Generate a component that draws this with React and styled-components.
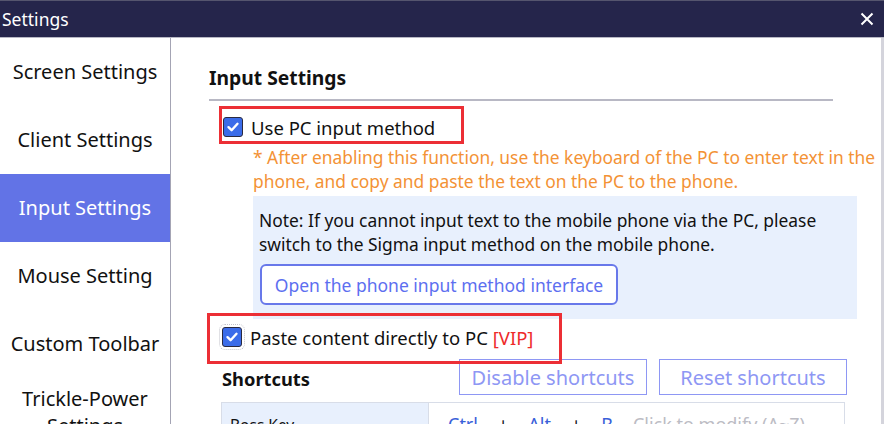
import styled, { createGlobalStyle } from "styled-components";

const GlobalStyle = createGlobalStyle`
  html, body {
    margin: 0;
    padding: 0;
    overflow: hidden;
    background: #ffffff;
  }
  body {
    font-family: "Noto Sans", "Liberation Sans", sans-serif;
    color: #111;
  }
`;

const menu = [
  "Screen Settings",
  "Client Settings",
  "Input Settings",
  "Mouse Setting",
  "Custom Toolbar",
  "Trickle-Power Settings",
];

const CheckIcon = () => (
  <svg width="14" height="14" viewBox="0 0 14 14">
    <path d="M2.5 7.2 L5.6 10.2 L11.5 3.8" fill="none" stroke="#fff" strokeWidth="2.4" strokeLinecap="round" strokeLinejoin="round" />
  </svg>
);

const CloseIcon = () => (
  <svg width="14" height="14" viewBox="0 0 14 14">
    <path d="M1.5 1.5 L12.5 12.5 M12.5 1.5 L1.5 12.5" stroke="#fff" strokeWidth="2" />
  </svg>
);

const App = () => {
  return (
    <Window>
      <GlobalStyle />
      <TitleBar>
        <span>Settings</span>
        <CloseButton>
          <CloseIcon />
        </CloseButton>
      </TitleBar>
      <BodyWrapper>
        <Sidebar>
          {menu.map((m) => (
            <MenuItem key={m} $active={m === "Input Settings"}>
              {m}
            </MenuItem>
          ))}
        </Sidebar>
        <Content>
          <Heading>Input Settings</Heading>
          <Divider />
          <CheckRow>
            <Highlight $left={-4} $top={-8} $w={245} $h={38} />
            <Checkbox>
              <CheckIcon />
            </Checkbox>
            <span>Use PC input method</span>
          </CheckRow>
          <Hint>
            * After enabling this function, use the keyboard of the PC to enter text in the
            phone, and copy and paste the text on the PC to the phone.
          </Hint>
          <NoteBox>
            <NoteText>
              Note: If you cannot input text to the mobile phone via the PC, please switch to the
              Sigma input method on the mobile phone.
            </NoteText>
            <OpenButton>Open the phone input method interface</OpenButton>
          </NoteBox>
          <CheckRow $second>
            <Highlight $left={-15} $top={-11} $w={355} $h={51} />
            <Checkbox $focus>
              <CheckIcon />
            </Checkbox>
            <span>
              Paste content directly to PC <Vip>[VIP]</Vip>
            </span>
          </CheckRow>
          <ShortcutHeader>
            <SubHeading>Shortcuts</SubHeading>
            <ButtonGroup>
              <OutlineButton>Disable shortcuts</OutlineButton>
              <OutlineButton>Reset shortcuts</OutlineButton>
            </ButtonGroup>
          </ShortcutHeader>
          <ShortcutTable>
            <KeyName>Boss Key</KeyName>
            <KeyCombo>
              <KeyPart>Ctrl</KeyPart>
              <Plus>+</Plus>
              <KeyPart>Alt</KeyPart>
              <Plus>+</Plus>
              <KeyPart>B</KeyPart>
              <Placeholder>Click to modify (A~Z)</Placeholder>
            </KeyCombo>
          </ShortcutTable>
        </Content>
      </BodyWrapper>
    </Window>
  );
};

export default App;

const Window = styled.div`
  width: 884px;
  height: 424px;
  display: flex;
  flex-direction: column;
  overflow: hidden;
`;

const TitleBar = styled.header`
  height: 36px;
  flex-shrink: 0;
  display: flex;
  align-items: center;
  justify-content: space-between;
  padding: 0 10px 0 2px;
  background-color: #25254b;
  border-top: 1px solid #55556e;
  border-bottom: 1px solid #b8b8c4;
  color: #fff;
  font-size: 17.5px;
`;

const CloseButton = styled.div`
  width: 14px;
  height: 14px;
  display: flex;
`;

const BodyWrapper = styled.div`
  flex: 1;
  display: flex;
  min-height: 0;
  border-right: 3px solid #d4d4dc;
`;

const Sidebar = styled.nav`
  width: 170px;
  flex-shrink: 0;
  border-right: 1px solid #a4a4b4;
  display: flex;
  flex-direction: column;
`;

const MenuItem = styled.div`
  height: 68px;
  flex-shrink: 0;
  display: flex;
  align-items: center;
  justify-content: center;
  text-align: center;
  font-size: 20px;
  line-height: 27px;
  padding: 0 0 1px 0;
  box-sizing: border-box;
  color: ${(p) => (p.$active ? "#fff" : "#111")};
  background-color: ${(p) => (p.$active ? "#6273e6" : "transparent")};
`;

const Content = styled.main`
  flex: 1;
  padding: 27px 0 0 38px;
  min-width: 0;
`;

const Heading = styled.h2`
  margin: 0;
  font-size: 19.3px;
  font-weight: 700;
  line-height: 25px;
`;

const Divider = styled.div`
  width: 624px;
  height: 2px;
  margin-top: 9px;
  background-color: #b8b8c4;
`;

const CheckRow = styled.div`
  position: relative;
  display: flex;
  align-items: center;
  gap: 8px;
  height: 26px;
  margin: ${(p) => (p.$second ? "5px 0 0 13px" : "13px 0 0 14px")};
  font-size: 18.5px;
`;

const Highlight = styled.span`
  position: absolute;
  left: ${(p) => p.$left}px;
  top: ${(p) => p.$top}px;
  width: ${(p) => p.$w}px;
  height: ${(p) => p.$h}px;
  box-sizing: border-box;
  border: 3px solid #ec2f35;
  pointer-events: none;
`;

const Checkbox = styled.span`
  width: 20px;
  height: 20px;
  box-sizing: border-box;
  flex-shrink: 0;
  display: flex;
  align-items: center;
  justify-content: center;
  background-color: #3b6ce9;
  border: 1px solid #2a2a40;
  border-radius: 3px;
  outline: ${(p) => (p.$focus ? "1px dotted #c4c4cc" : "none")};
  outline-offset: 2px;
`;

const Hint = styled.p`
  margin: 5px 0 0 44px;
  font-size: 17.4px;
  line-height: 24px;
  color: #f39235;
`;

const NoteBox = styled.div`
  width: 604px;
  box-sizing: border-box;
  margin: 3px 0 0 44px;
  padding: 12px 6px 14px;
  background-color: #e8f0fd;
`;

const NoteText = styled.p`
  margin: 0;
  font-size: 17.4px;
  line-height: 24px;
  color: #111;
`;

const OpenButton = styled.button`
  margin: 8px 0 0 1px;
  height: 41px;
  width: 358px;
  background: #fff;
  border: 2px solid #6878ea;
  border-radius: 6px;
  font-family: inherit;
  font-size: 17.5px;
  color: #5d6ff0;
  padding: 0;
`;

const Vip = styled.span`
  color: #ee2a2a;
`;

const ShortcutHeader = styled.div`
  width: 625px;
  margin: 9px 0 0 13px;
  display: flex;
  align-items: center;
  justify-content: space-between;
`;

const SubHeading = styled.h3`
  margin: 3px 0 0;
  font-size: 18.3px;
  font-weight: 700;
`;

const ButtonGroup = styled.div`
  display: flex;
  gap: 12px;
`;

const OutlineButton = styled.button`
  width: 188px;
  height: 36px;
  padding: 0;
  background: #fff;
  border: 1px solid #8e97f4;
  font-family: inherit;
  font-size: 20px;
  color: #8e97f4;
`;

const ShortcutTable = styled.div`
  width: 622px;
  margin: 7px 0 0 12px;
  display: flex;
  border: 1px solid #d8dde8;
  height: 44px;
`;

const KeyName = styled.div`
  width: 207px;
  box-sizing: border-box;
  padding: 11px 8px 0;
  background-color: #e8f0fd;
  border-right: 1px solid #d8dde8;
  font-size: 15.5px;
`;

const KeyCombo = styled.div`
  flex: 1;
  display: flex;
  gap: 20px;
  padding: 9px 0 0 19px;
  font-size: 18px;
`;

const KeyPart = styled.span`
  color: #3a5fd9;
`;

const Plus = styled.span`
  color: #111;
`;

const Placeholder = styled.span`
  color: #bcbcc4;
`;
